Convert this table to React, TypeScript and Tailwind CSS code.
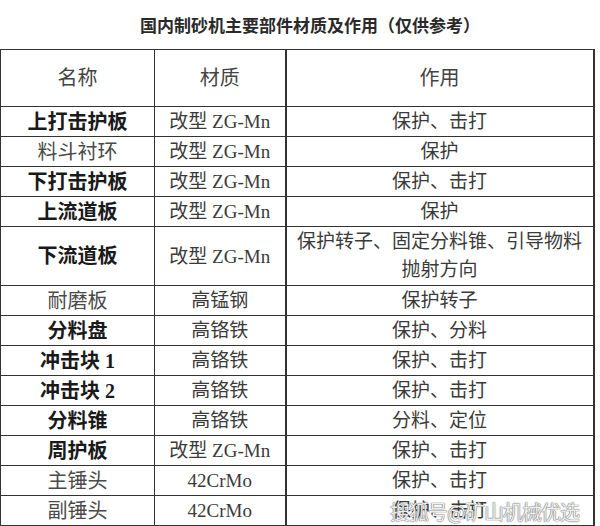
const rows: { name: string; bold: boolean; material: string; use: string[]; tall?: boolean }[] = [
  { name: '上打击护板', bold: true, material: '改型 ZG-Mn', use: ['保护、击打'] },
  { name: '料斗衬环', bold: false, material: '改型 ZG-Mn', use: ['保护'] },
  { name: '下打击护板', bold: true, material: '改型 ZG-Mn', use: ['保护、击打'] },
  { name: '上流道板', bold: true, material: '改型 ZG-Mn', use: ['保护'] },
  { name: '下流道板', bold: true, material: '改型 ZG-Mn', use: ['保护转子、固定分料锥、引导物料', '抛射方向'], tall: true },
  { name: '耐磨板', bold: false, material: '高锰钢', use: ['保护转子'] },
  { name: '分料盘', bold: true, material: '高铬铁', use: ['保护、分料'] },
  { name: '冲击块 1', bold: true, material: '高铬铁', use: ['保护、击打'] },
  { name: '冲击块 2', bold: true, material: '高铬铁', use: ['保护、击打'] },
  { name: '分料锥', bold: true, material: '高铬铁', use: ['分料、定位'] },
  { name: '周护板', bold: true, material: '改型 ZG-Mn', use: ['保护、击打'] },
  { name: '主锤头', bold: false, material: '42CrMo', use: ['保护、击打'] },
  { name: '副锤头', bold: false, material: '42CrMo', use: ['保护、击打'] },
];

const serif = "font-['Liberation_Serif','Noto_Sans_CJK_SC',serif]";

export default function App() {
  return (
    <div className="relative w-[600px] h-[526px] bg-white overflow-hidden">
      <div className="h-[49px] flex items-center justify-center pl-[20px]">
        <h1 className="text-[17px] font-bold text-[#2a2a2a] font-['Noto_Sans_CJK_SC',sans-serif]">
          国内制砂机主要部件材质及作用（仅供参考）
        </h1>
      </div>

      <table className={`table-fixed border-collapse w-[593px] text-[19px] ${serif}`}>
        <colgroup>
          <col className="w-[154px]" />
          <col className="w-[131px]" />
          <col className="w-[308px]" />
        </colgroup>
        <thead>
          <tr className="h-[57px]">
            <th className="border border-[#333] font-normal text-[20px] text-[#444]">名称</th>
            <th className="border border-[#333] border-r-2 font-normal text-[20px] text-[#444]">材质</th>
            <th className="border border-[#333] border-r-2 font-normal text-[20px] text-[#444]">作用</th>
          </tr>
        </thead>
        <tbody>
          {rows.map((r) => (
            <tr key={r.name} className={r.tall ? 'h-[59px]' : 'h-[30px]'}>
              <td
                className={`border border-[#333] text-center text-[20px] leading-none ${
                  r.bold ? 'font-bold text-[#1a1a1a]' : 'text-[#4a4a4a]'
                }`}
              >
                {r.name}
              </td>
              <td className="border border-[#333] border-r-2 text-center leading-none text-[#3a3a3a]">
                {r.material}
              </td>
              <td className="border border-[#333] border-r-2 text-center leading-[28px] text-[#3a3a3a]">
                {r.use.map((u) => (
                  <div key={u}>{u}</div>
                ))}
              </td>
            </tr>
          ))}
        </tbody>
      </table>

      <div className="absolute left-[390px] top-[497px] text-[20px] text-white/90 font-['Noto_Sans_CJK_SC',sans-serif] [text-shadow:0_0_1px_#555,0_0_1px_#555] tracking-[-1px]">
        搜狐号@矿山机械优选
      </div>
    </div>
  );
}
